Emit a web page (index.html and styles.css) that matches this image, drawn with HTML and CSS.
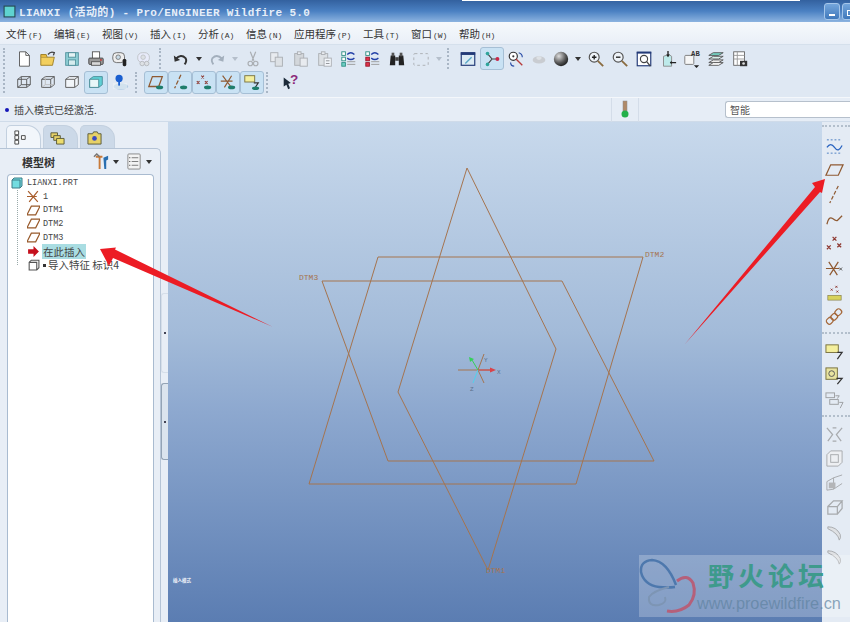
FILE: index.html
```html
<!DOCTYPE html>
<html lang="zh-CN">
<head>
  <meta charset="UTF-8">
  <title>LIANXI (活动的) - Pro/ENGINEER Wildfire 5.0</title>
  <link rel="stylesheet" href="styles.css">
</head>
<body>
  <div class="window">
    <div class="title-bar">
      <svg class="title-icon" viewBox="0 0 12 12"><rect x="1" y="1" width="10" height="10" fill="#5fd3d0" stroke="#26474f"/></svg>
      <span class="title-text">LIANXI (活动的) - Pro/ENGINEER Wildfire 5.0</span>
      <div class="win-buttons">
        <div class="win-btn"><i class="win-min"></i></div>
        <div class="win-btn"><i class="win-max"></i></div>
      </div>
    </div>

    <div class="menu-bar">
      <div class="menu-item">文件<span>(F)</span></div>
      <div class="menu-item">编辑<span>(E)</span></div>
      <div class="menu-item">视图<span>(V)</span></div>
      <div class="menu-item">插入<span>(I)</span></div>
      <div class="menu-item">分析<span>(A)</span></div>
      <div class="menu-item">信息<span>(N)</span></div>
      <div class="menu-item">应用程序<span>(P)</span></div>
      <div class="menu-item">工具<span>(T)</span></div>
      <div class="menu-item">窗口<span>(W)</span></div>
      <div class="menu-item">帮助<span>(H)</span></div>
    </div>

    <div class="toolbars">
      <div class="tool-row">
        <div class="grip"></div>
        <div class="tool"><svg viewBox="0 0 20 20"><path d="M5 2h7l4 4v12H5z" fill="#fff" stroke="#555"/><path d="M12 2v4h4" fill="none" stroke="#555"/></svg></div>
        <div class="tool"><svg viewBox="0 0 20 20"><path d="M2 8h15l-2 9H2z" fill="#f2cf5e" stroke="#9c7d22"/><path d="M2 8V5h6l1 3" fill="#e4b93f" stroke="#9c7d22"/><path d="M10 5q3-4 7-2l-1 3" fill="none" stroke="#444" stroke-width="1.5"/></svg></div>
        <div class="tool"><svg viewBox="0 0 20 20"><rect x="3" y="3" width="14" height="14" fill="#8fd0d6" stroke="#4f8f9a"/><rect x="6" y="3" width="8" height="5" fill="#e4f3f4" stroke="#4f8f9a"/><rect x="6" y="11" width="8" height="6" fill="#d5ecee" stroke="#4f8f9a"/></svg></div>
        <div class="tool"><svg viewBox="0 0 20 20"><rect x="6" y="2" width="8" height="8" fill="#fff" stroke="#555"/><rect x="2" y="9" width="16" height="7" rx="1" fill="#9a9a9a" stroke="#444"/><rect x="5" y="13" width="10" height="4" fill="#d8d8d8" stroke="#555"/><circle cx="15.500" cy="11" r="1" fill="#c62b2b"/></svg></div>
        <div class="tool"><svg viewBox="0 0 20 20"><rect x="2" y="3" width="13" height="11" rx="4" fill="#eee" stroke="#666"/><circle cx="8" cy="8" r="2.500" fill="#c9dbe8" stroke="#777"/><rect x="13" y="10" width="4" height="8" rx="1.500" fill="#222"/></svg></div>
        <div class="tool dim"><svg viewBox="0 0 20 20"><rect x="3" y="3" width="13" height="11" rx="5" fill="#eef" stroke="#aaa"/><circle cx="9" cy="8" r="2.500" fill="#ddd" stroke="#aaa"/><circle cx="13" cy="15" r="2.500" fill="#ddd" stroke="#999"/><circle cx="8" cy="15" r="2.500" fill="#ddd" stroke="#999"/></svg></div>
        <div class="grip grip-gap"></div>
        <div class="tool"><svg viewBox="0 0 20 20"><path d="M4 10q6-6 11-1q2 3-1 7" fill="none" stroke="#333" stroke-width="2.200"/><path d="M2 6l1 7 6-2z" fill="#333"/></svg></div>
        <div class="drop"></div>
        <div class="tool dim"><svg viewBox="0 0 20 20"><path d="M16 10q-6-6-11-1q-2 3 1 7" fill="none" stroke="#7c8a99" stroke-width="2"/><path d="M18 6l-1 7-6-2z" fill="#7c8a99"/></svg></div>
        <div class="drop drop-dim"></div>
        <div class="tool dim"><svg viewBox="0 0 20 20"><path d="M7 2l4 10M13 2l-4 10" stroke="#888" stroke-width="1.300"/><circle cx="7" cy="15" r="2.500" fill="none" stroke="#888" stroke-width="1.300"/><circle cx="13" cy="15" r="2.500" fill="none" stroke="#888" stroke-width="1.300"/></svg></div>
        <div class="tool dim"><svg viewBox="0 0 20 20"><rect x="3" y="3" width="8" height="10" fill="#eee" stroke="#888"/><rect x="8" y="8" width="8" height="10" fill="#ddd" stroke="#888"/></svg></div>
        <div class="tool dim"><svg viewBox="0 0 20 20"><rect x="3" y="4" width="10" height="13" fill="#ccc" stroke="#888"/><rect x="6" y="2" width="4" height="3" fill="#eee" stroke="#888"/><rect x="9" y="9" width="8" height="9" fill="#eee" stroke="#888"/></svg></div>
        <div class="tool dim"><svg viewBox="0 0 20 20"><rect x="3" y="4" width="10" height="13" fill="#ddd" stroke="#888"/><rect x="6" y="2" width="4" height="3" fill="#eee" stroke="#888"/><rect x="9" y="9" width="8" height="9" fill="#fff" stroke="#888"/><path d="M11 12h4M11 15h4" stroke="#555"/></svg></div>
        <div class="tool"><svg viewBox="0 0 20 20"><rect x="2" y="2" width="4" height="4" fill="#fff" stroke="#2c8f83"/><rect x="2" y="8" width="4" height="4" fill="#fff" stroke="#2c8f83"/><rect x="2" y="14" width="4" height="4" fill="#6ecfc4" stroke="#2c8f83"/><path d="M8 5q4-4 8 0M8 9q4 3 8 0" fill="none" stroke="#2340a8" stroke-width="1.500"/><path d="M8 13h9M8 16h9" stroke="#999"/></svg></div>
        <div class="tool"><svg viewBox="0 0 20 20"><rect x="2" y="2" width="4" height="4" fill="#fff" stroke="#2c8f83"/><rect x="2" y="8" width="4" height="4" fill="#e0314a" stroke="#99182b"/><rect x="2" y="14" width="4" height="4" fill="#e0314a" stroke="#99182b"/><path d="M8 5q4-4 8 0M8 9q4 3 8 0" fill="none" stroke="#2340a8" stroke-width="1.500"/><path d="M8 13h9M8 16h9" stroke="#999"/></svg></div>
        <div class="tool"><svg viewBox="0 0 20 20"><path d="M3 6h5v11H2zM12 6h5l1 11h-6z" fill="#222"/><rect x="8" y="8" width="4" height="4" fill="#444"/><rect x="4" y="3" width="3" height="4" fill="#555"/><rect x="13" y="3" width="3" height="4" fill="#555"/></svg></div>
        <div class="tool dim"><svg viewBox="0 0 20 20"><rect x="2" y="4" width="16" height="13" rx="1" fill="none" stroke="#888" stroke-dasharray="3 3"/></svg></div>
        <div class="drop drop-dim"></div>
        <div class="grip grip-gap-b"></div>
        <div class="tool"><svg viewBox="0 0 20 20"><rect x="2.500" y="3" width="15" height="14" fill="#dcebf4" stroke="#233a77" stroke-width="1.300"/><rect x="2" y="3" width="16" height="2.500" fill="#233a77"/><path d="M7 15l7-7" stroke="#58a6c6" stroke-width="1.500"/></svg></div>
        <div class="tool on"><svg viewBox="0 0 20 20"><path d="M5 4l5 6-5 6M10 10h7" fill="none" stroke="#444" stroke-width="1.300"/><circle cx="5" cy="4" r="2" fill="#2fa59b"/><circle cx="5" cy="16" r="2" fill="#2fa59b"/><circle cx="16" cy="10" r="2.200" fill="#c8284a"/></svg></div>
        <div class="tool"><svg viewBox="0 0 20 20"><circle cx="7" cy="7" r="4.500" fill="#fff" stroke="#333" stroke-width="1.300"/><circle cx="7" cy="7" r="1.200" fill="#333"/><path d="M10 10l7 7" stroke="#b63a3a" stroke-width="1.500"/><path d="M13 3q4 1 4 5M4 14q0 4 4 4" fill="none" stroke="#2c4fa8" stroke-width="1.300"/></svg></div>
        <div class="tool dim tool-slim"><svg viewBox="0 0 20 20"><ellipse cx="10" cy="11" rx="7" ry="4" fill="#bbb"/><ellipse cx="10" cy="9" rx="3" ry="2" fill="#ddd"/></svg></div>
        <div class="tool tool-slim"><svg viewBox="0 0 20 20"><defs><radialGradient id="ball" cx=".35" cy=".3" r=".8"><stop offset="0" stop-color="#ddd"/><stop offset=".6" stop-color="#555"/><stop offset="1" stop-color="#111"/></radialGradient></defs><circle cx="10" cy="10" r="8" fill="url(#ball)"/></svg></div>
        <div class="drop"></div>
        <div class="tool"><svg viewBox="0 0 20 20"><circle cx="8" cy="8" r="5.500" fill="#eef3f8" stroke="#555" stroke-width="1.300"/><path d="M5.500 8h5M8 5.500v5" stroke="#222" stroke-width="1.500"/><path d="M12 12l6 6" stroke="#8a6b3f" stroke-width="2"/></svg></div>
        <div class="tool"><svg viewBox="0 0 20 20"><circle cx="8" cy="8" r="5.500" fill="#eef3f8" stroke="#555" stroke-width="1.300"/><path d="M5.500 8h5" stroke="#222" stroke-width="1.500"/><path d="M12 12l6 6" stroke="#8a6b3f" stroke-width="2"/></svg></div>
        <div class="tool"><svg viewBox="0 0 20 20"><rect x="2.500" y="2.500" width="15" height="15" fill="#fff" stroke="#233a77" stroke-width="1.300"/><rect x="2" y="2" width="16" height="2" fill="#233a77"/><circle cx="10" cy="10" r="4" fill="none" stroke="#444" stroke-width="1.300"/><path d="M13 13l4 5" stroke="#444" stroke-width="1.500"/></svg></div>
        <div class="tool"><svg viewBox="0 0 20 20"><path d="M5 7l6-2 3 2v11H5z" fill="#bdeaea" stroke="#888"/><path d="M10 1v6M19 14h-6" stroke="#222" stroke-width="1.500"/><path d="M8 5l2 3 2-3zM14 12l-2 2 2 2z" fill="#222"/></svg></div>
        <div class="tool"><svg viewBox="0 0 20 20"><rect x="2" y="6" width="10" height="10" rx="1" fill="#f6f6f6" stroke="#777"/><text class="svg-tag" x="9" y="7">AB</text><path d="M12 17h6l-3 3z" fill="#222"/></svg></div>
        <div class="tool"><svg viewBox="0 0 20 20"><path d="M2 6l5-3h11l-5 3z" fill="#76d6c6" stroke="#555"/><path d="M2 10l5-3h11l-5 3z" fill="#d9efe9" stroke="#555"/><path d="M2 14l5-3h11l-5 3z" fill="#eee" stroke="#555"/><path d="M2 17l5-3h11l-5 3z" fill="#fff" stroke="#555"/></svg></div>
        <div class="tool"><svg viewBox="0 0 20 20"><rect x="3" y="2" width="12" height="15" fill="#fff" stroke="#666"/><path d="M3 6h12M3 10h12M7 2v15" stroke="#999"/><rect x="10" y="12" width="8" height="6" fill="#333"/><circle cx="14" cy="15" r="1.500" fill="#ddd"/></svg></div>
      </div>

      <div class="tool-row">
        <div class="grip"></div>
        <div class="tool"><svg viewBox="0 0 20 20"><path d="M3 7l4-3h10v9l-4 3H3zM3 7h10v9M13 7l4-3M7 4v9h10M3 16l4-3" fill="none" stroke="#555"/></svg></div>
        <div class="tool"><svg viewBox="0 0 20 20"><path d="M3 7l4-3h10v9l-4 3H3zM3 7h10v9M13 7l4-3" fill="none" stroke="#555"/><path d="M7 4v9h10M3 16l4-3" fill="none" stroke="#bbb"/></svg></div>
        <div class="tool"><svg viewBox="0 0 20 20"><path d="M3 7l4-3h10v9l-4 3H3zM3 7h10v9M13 7l4-3" fill="#f2f6fa" stroke="#555"/></svg></div>
        <div class="tool on"><svg viewBox="0 0 20 20"><path d="M3 7l4-3h10v9l-4 3H3z" fill="#5fd0d5" stroke="#4b8c97"/><path d="M3 7h10v9H3z" fill="#e8f7f8" stroke="#4b8c97"/></svg></div>
        <div class="tool"><svg viewBox="0 0 20 20"><ellipse cx="11" cy="15" rx="8" ry="3.500" fill="#a9c7e0"/><rect x="2" y="11" width="16" height="7" fill="#eef3f6" opacity=".6"/><circle cx="9" cy="6" r="4" fill="#1a5fd0"/><rect x="8" y="9" width="2" height="5" fill="#1a5fd0"/></svg></div>
        <div class="grip grip-gap-c"></div>
        <div class="tool on"><svg viewBox="0 0 20 20"><path d="M6 4h11l-4 11H2z" fill="none" stroke="#8f5a32" stroke-width="1.400"/><ellipse cx="14" cy="16" rx="4" ry="2" fill="#1e7d6c"/></svg></div>
        <div class="tool on"><svg viewBox="0 0 20 20"><path d="M11 2L4 17" stroke="#8f5a32" stroke-width="1.400" stroke-dasharray="5 2"/><ellipse cx="14" cy="16" rx="4" ry="2" fill="#1e7d6c"/></svg></div>
        <div class="tool on"><svg viewBox="0 0 20 20"><path d="M7 3l3 3M10 3L7 6M2 9l3 3M5 9l-3 3M11 9l3 3M14 9l-3 3" stroke="#8f3a32" stroke-width="1.200"/><ellipse cx="14" cy="16" rx="4" ry="2" fill="#1e7d6c"/></svg></div>
        <div class="tool on"><svg viewBox="0 0 20 20"><path d="M4 3l9 12M14 3L6 16M2 9h13" stroke="#8f5a32" stroke-width="1.300"/><ellipse cx="14" cy="16" rx="4" ry="2" fill="#1e7d6c"/></svg></div>
        <div class="tool on"><svg viewBox="0 0 20 20"><rect x="2" y="3" width="11" height="7" fill="#f4ef9d" stroke="#77703c"/><path d="M12 11h5l-4 6" fill="none" stroke="#333" stroke-width="1.300"/><ellipse cx="14" cy="17" rx="4" ry="2" fill="#1e7d6c"/></svg></div>
        <div class="grip grip-gap-d"></div>
        <div class="tool"><svg viewBox="0 0 20 20"><path d="M3 5l8 6-3 1 2 5-2 1-2-5-3 2z" fill="#1d2b3a"/><text class="svg-help" x="10" y="12">?</text></svg></div>
      </div>
    </div>

    <div class="message-bar">
      <div class="message"><i class="bullet"></i>插入模式已经激活.</div>
      <div class="light-cell">
        <svg viewBox="0 0 10 20" class="light"><rect x="3" y="1" width="4" height="10" fill="#b08a68" stroke="#8d8d8d" stroke-width=".5"/><circle cx="5" cy="14" r="3.500" fill="#22b04a"/></svg>
      </div>
      <div class="filter-box">智能</div>
    </div>

    <div class="main">
      <div class="sidebar">
        <div class="panel-wrap">
          <div class="tabs">
            <div class="tab tab-on"><svg viewBox="0 0 16 16"><path d="M2 1h4v4H2zM2 6h4v4H2zM2 11h4v4H2zM9 6h4v4H9z" fill="#fff" stroke="#444"/></svg></div>
            <div class="tab"><svg viewBox="0 0 16 16"><path d="M1 3h7v5H1z" fill="#e6d168" stroke="#5a5a3a"/><path d="M4 6h7v5H4z" fill="#e6d168" stroke="#5a5a3a"/><path d="M7 9h8v6H7z" fill="#ecdc6d" stroke="#5a5a3a"/></svg></div>
            <div class="tab"><svg viewBox="0 0 16 16"><path d="M1 4h5l1-2h4l1 2h3v11H1z" fill="#e6d168" stroke="#5a5a3a"/><circle cx="8" cy="9" r="2.500" fill="#3a49c2"/></svg></div>
          </div>
          <div class="panel">
            <div class="panel-head">
              <b class="panel-title">模型树</b>
              <svg class="head-icon" viewBox="0 0 18 18"><path d="M3 3h7v2H8v12H6V5H3z" fill="#c87a3a"/><path d="M11 5l5-2v4l-2 1v9h-2z" fill="#2a6fb0"/><path d="M1 4l3-3 3 3" fill="none" stroke="#777" stroke-width="1.500"/></svg>
              <i class="head-drop"></i>
              <svg class="head-icon list-icon" viewBox="0 0 18 18"><rect x="2" y="1" width="13" height="16" rx="1" fill="#f3f3f3" stroke="#888"/><path d="M6 5h7M6 9h7M6 13h7" stroke="#777"/><path d="M3.500 5h1M3.500 9h1M3.500 13h1" stroke="#222"/></svg>
              <i class="head-drop"></i>
            </div>
            <div class="tree">
              <div class="tree-row tree-root">
                <svg class="tree-icon" viewBox="0 0 12 12"><path d="M1 3l2-2h8v8l-2 2H1z" fill="#73dce0" stroke="#3f7d88"/><path d="M1 3h8v8" fill="none" stroke="#3f7d88"/></svg>
                <span>LIANXI.PRT</span>
              </div>
              <div class="tree-kids">
                <div class="tree-row">
                  <svg class="tree-icon" viewBox="0 0 12 12"><path d="M1 1l9 10M10 1L2 11M0 6h9" stroke="#a85c2a" stroke-width="1.100"/></svg>
                  <span>1</span>
                </div>
                <div class="tree-row">
                  <svg class="tree-icon" viewBox="0 0 12 12"><path d="M4 2h8L8 10H0z" fill="#fff" stroke="#97592a" stroke-width="1.100"/></svg>
                  <span>DTM1</span>
                </div>
                <div class="tree-row">
                  <svg class="tree-icon" viewBox="0 0 12 12"><path d="M4 2h8L8 10H0z" fill="#fff" stroke="#97592a" stroke-width="1.100"/></svg>
                  <span>DTM2</span>
                </div>
                <div class="tree-row">
                  <svg class="tree-icon" viewBox="0 0 12 12"><path d="M4 2h8L8 10H0z" fill="#fff" stroke="#97592a" stroke-width="1.100"/></svg>
                  <span>DTM3</span>
                </div>
                <div class="tree-row">
                  <svg class="tree-icon" viewBox="0 0 12 12"><path d="M1 4h5V1l5 5-5 5V8H1z" fill="#c5101c"/></svg>
                  <span class="tree-cn tree-here">在此插入</span>
                </div>
                <div class="tree-row">
                  <svg class="tree-icon" viewBox="0 0 12 12"><path d="M2 4l2-2h7v7l-2 2H2z" fill="#fff" stroke="#555"/><path d="M2 4h7v7" fill="none" stroke="#555"/></svg>
                  <span class="tree-cn"><i class="tree-mark"></i>导入特征 标识4</span>
                </div>
              </div>
            </div>
          </div>
        </div>
        <div class="sash">
          <div class="sash-handle"><i></i></div>
          <div class="sash-handle sash-handle-dark"><i></i></div>
        </div>
      </div>

      <div class="canvas">
        <svg class="model" viewBox="168 122 654 500">
          <g class="datum">
            <path d="M467 168L556 349L488 570L398 392Z"/>
            <path d="M378 257H643L576 484H309Z"/>
            <path d="M322 281H562L654 461H388Z"/>
          </g>
          <text class="datum-label" x="645" y="257">DTM2</text>
          <text class="datum-label" x="299" y="280">DTM3</text>
          <text class="datum-label" x="486" y="573">DTM1</text>
          <g class="csys">
            <path d="M478 370L484 354M478 370L484 383" stroke="#a5744f"/>
            <path d="M458 370H492" stroke="#a5744f"/>
            <path d="M478 370H490" stroke="#d9434a"/>
            <path d="M490 367.500L496 370L490 372.500Z" fill="#d9434a"/>
            <path d="M478 370L472 360" stroke="#35d05a" stroke-width="1.500"/>
            <path d="M469 357L474 359L470 362Z" fill="#35d05a"/>
            <path d="M478 370L473 383" stroke="#4fd2ee" stroke-width="1.500"/>
          </g>
          <text class="csys-label" x="497" y="374">X</text>
          <text class="csys-label" x="484" y="362">Y</text>
          <text class="csys-label" x="470" y="391">Z</text>
          <text class="mode-label" x="173" y="582">插入模式</text>
        </svg>
      </div>

      <div class="side-tools">
        <div class="side-rule"></div>
        <div class="side-tool"><svg viewBox="0 0 20 20"><path d="M2 3h16M2 17h16" stroke="#4a7cc0" stroke-dasharray="2 2"/><path d="M2 11q4-6 8 0t8-2" fill="none" stroke="#2a64c0" stroke-width="1.300"/></svg></div>
        <div class="side-tool"><svg viewBox="0 0 20 20"><path d="M6 4h13l-5 11H1z" fill="none" stroke="#8f5a32" stroke-width="1.300"/></svg></div>
        <div class="side-tool"><svg viewBox="0 0 20 20"><path d="M14 1L5 19" stroke="#8f5a32" stroke-width="1.300" stroke-dasharray="4 2"/></svg></div>
        <div class="side-tool"><svg viewBox="0 0 20 20"><path d="M2 15q2-9 6-6t5 2t5-5" fill="none" stroke="#8f5a32" stroke-width="1.300"/></svg></div>
        <div class="side-tool"><svg viewBox="0 0 20 20"><path d="M8 3l4 4M12 3L8 7M2 12l4 4M6 12l-4 4M13 10l4 4M17 10l-4 4" stroke="#8f3a32" stroke-width="1.300"/></svg></div>
        <div class="side-tool"><svg viewBox="0 0 20 20"><path d="M4 3l9 14M14 3L5 17M1 10h14" stroke="#8f5a32" stroke-width="1.300"/><path d="M15 9l3 3M18 9l-3 3" stroke="#555"/></svg></div>
        <div class="side-tool"><svg viewBox="0 0 20 20"><rect x="3" y="13" width="14" height="5" fill="#d8d25c" stroke="#77703c" stroke-width=".6"/><path d="M6 6l2 2M8 6L6 8M11 3l2 2M13 3l-2 2M12 8l2 2M14 8l-2 2" stroke="#8f3a32"/></svg></div>
        <div class="side-tool"><svg viewBox="0 0 20 20"><rect x="2" y="11" width="6" height="7" rx="2.500" transform="rotate(45 5 14.500)" fill="none" stroke="#a5683a" stroke-width="1.300"/><rect x="7" y="7" width="6" height="7" rx="2.500" transform="rotate(45 10 10)" fill="none" stroke="#a5683a" stroke-width="1.300"/><rect x="11" y="2" width="6" height="7" rx="2.500" transform="rotate(45 14 5.500)" fill="none" stroke="#a5683a" stroke-width="1.300"/></svg></div>
        <div class="side-rule side-rule-gap"></div>
        <div class="side-tool"><svg viewBox="0 0 20 20"><rect x="1" y="3" width="13" height="8" fill="#f4ef9d" stroke="#77703c"/><path d="M13 11h5l-5 7" fill="none" stroke="#333" stroke-width="1.300"/></svg></div>
        <div class="side-tool"><svg viewBox="0 0 20 20"><rect x="1" y="2" width="12" height="12" fill="#e8e4a0" stroke="#77703c"/><circle cx="7" cy="8" r="3" fill="none" stroke="#555"/><path d="M12 13h6l-5 6" fill="none" stroke="#333" stroke-width="1.300"/></svg></div>
        <div class="side-tool side-dim"><svg viewBox="0 0 20 20"><rect x="1" y="2" width="9" height="5" fill="none" stroke="#777"/><rect x="5" y="9" width="9" height="5" fill="none" stroke="#777"/><path d="M11 5h4l-2 3M15 12h4l-3 6" fill="none" stroke="#777"/></svg></div>
        <div class="side-rule side-rule-gap"></div>
        <div class="side-tool side-dim"><svg viewBox="0 0 20 20"><path d="M2 3l6 7-5 7M18 3l-6 7 5 7M8 3h4M8 17h4" fill="none" stroke="#888" stroke-width="1.300"/></svg></div>
        <div class="side-tool side-dim"><svg viewBox="0 0 20 20"><path d="M2 6l4-4h12v12l-4 4H2z" fill="#f2f2f2" stroke="#888"/><rect x="6" y="6" width="8" height="8" fill="none" stroke="#888"/></svg></div>
        <div class="side-tool side-dim"><svg viewBox="0 0 20 20"><path d="M2 8l7-4v12l-7 1zM9 4l9-3M9 16l9-6" fill="none" stroke="#888"/><rect x="4" y="9" width="7" height="6" fill="#999"/></svg></div>
        <div class="side-tool side-dim"><svg viewBox="0 0 20 20"><path d="M3 9h10v8H3zM3 9l6-6h9l-5 6M13 17l5-6V3" fill="none" stroke="#888" stroke-width="1.300"/></svg></div>
        <div class="side-tool side-dim"><svg viewBox="0 0 20 20"><path d="M3 4q9 0 13 8q1 4-1 6q-1-7-12-12z" fill="#ddd" stroke="#888"/></svg></div>
        <div class="side-tool side-dim"><svg viewBox="0 0 20 20"><path d="M3 4q9 0 13 8q1 4-1 6q-1-7-12-12z" fill="#ddd" stroke="#888"/></svg></div>
      </div>
    </div>
  </div>

  <svg class="arrows" viewBox="0 0 850 622">
    <path d="M100 249L116 247.500L115 249.500L273 327L113 258L109 266Z"/>
    <path d="M825 179L812 183L815 187L685 344L820 192L822 193Z"/>
  </svg>

  <div class="watermark">
    <svg class="wm-logo" viewBox="0 0 60 62">
      <path d="M37 30Q28 6 13 5Q1 6 2 17Q5 30 20 32Q28 33 36 32" fill="none" stroke="#4d78ad" stroke-width="2.500"/>
      <path d="M30 32Q14 36 10 42Q9 52 20 50Q28 48 26 42" fill="none" stroke="#7d95b4" stroke-width="2"/>
      <path d="M28 56Q40 58 50 50Q58 40 54 28Q48 18 38 26" fill="none" stroke="#b5607a" stroke-width="3"/>
    </svg>
    <div class="wm-text">
      <div class="wm-name">野火论坛</div>
      <div class="wm-url">www.proewildfire.cn</div>
    </div>
  </div>
</body>
</html>
```

FILE: styles.css
```css
* {
  box-sizing: border-box;
}

body {
  margin: 0;
  width: 850px;
  height: 622px;
  overflow: hidden;
  position: relative;
  font-family: "Noto Sans CJK SC", "Liberation Sans", sans-serif;
  color: #333;
  background: #e4ebf4;
}

.window {
  width: 850px;
  height: 622px;
  display: flex;
  flex-direction: column;
}

/* title bar */
.title-bar {
  height: 22px;
  flex: none;
  display: flex;
  align-items: center;
  padding-left: 3px;
  background:
    linear-gradient(#fff, #fff) 462px 0 / 338px 1px no-repeat,
    linear-gradient(#33619f, #4a80c2 50%, #8cb3e0);
  color: #e6eef8;
}

.title-icon {
  width: 13px;
  height: 13px;
  margin-right: 3px;
}

.title-text {
  font-family: "Liberation Mono", "Noto Sans CJK SC", monospace;
  font-size: 11px;
  font-weight: bold;
  letter-spacing: .35px;
}

.win-buttons {
  margin-left: auto;
  display: flex;
  gap: 2px;
  margin-right: -8px;
}

.win-btn {
  width: 16px;
  height: 17px;
  border-radius: 3px;
  background: linear-gradient(#74a6dc, #3f78bb);
  border: 1px solid #a5c6ea;
  display: flex;
  align-items: flex-end;
  padding: 0 0 3px 4px;
}

.win-min {
  width: 6px;
  height: 2px;
  background: #fff;
}

.win-max {
  width: 7px;
  height: 6px;
  border: 1px solid #fff;
}

/* menu */
.menu-bar {
  height: 23px;
  flex: none;
  display: flex;
  align-items: center;
  gap: 11.600px;
  padding-left: 6px;
  background: linear-gradient(#f6f9fc, #e9eff7);
  border-bottom: 1px solid #d5e0ec;
  font-size: 10.500px;
}

.menu-item span {
  margin-left: 1px;
  font-family: "Liberation Mono", monospace;
  font-size: 8px;
}

/* toolbars */
.toolbars {
  height: 52px;
  flex: none;
  background: #dfe8f3;
  padding: 2px 0 0 3px;
}

.tool-row {
  height: 23.500px;
  display: flex;
  align-items: center;
}

.tool {
  width: 24px;
  height: 23px;
  flex: none;
  display: flex;
  align-items: center;
  justify-content: center;
  border-radius: 3px;
}

.tool svg {
  width: 18px;
  height: 18px;
}

.tool-slim {
  width: 22px;
}

.tool.on {
  background: #c9e2f4;
  border: 1px solid #a6bfd5;
}

.dim {
  opacity: .6;
}

.grip {
  width: 3px;
  height: 21px;
  flex: none;
  margin: 0 6px 0 0;
  border-left: 2px dotted #a9b6c5;
}

.grip-gap {
  margin: 0 7px 0 3px;
}

.grip-gap-b {
  margin: 0 6px 0 2px;
}

.grip-gap-c {
  margin: 0 6px 0 3px;
}

.grip-gap-d {
  margin: 0 9px 0 2px;
}

.drop {
  width: 0;
  height: 0;
  flex: none;
  margin: 0 3px;
  border-left: 3px solid transparent;
  border-right: 3px solid transparent;
  border-top: 4px solid #333;
}

.drop-dim {
  border-top-color: #b5bfcb;
}

.svg-tag {
  font-family: "Liberation Mono", monospace;
  font-size: 8px;
  font-weight: bold;
  fill: #333;
}

.svg-help {
  font-family: "Liberation Sans", sans-serif;
  font-size: 15px;
  font-weight: bold;
  fill: #8c2a7a;
}

/* message area */
.message-bar {
  height: 25px;
  flex: none;
  display: flex;
  align-items: center;
  background: #e6edf6;
  border-top: 1px solid #f4f7fb;
  border-bottom: 1px solid #cfdbe9;
  font-size: 10px;
}

.message {
  width: 611px;
  flex: none;
  display: flex;
  align-items: center;
  padding-left: 5px;
  color: #444;
}

.bullet {
  width: 4px;
  height: 4px;
  margin-right: 5px;
  border-radius: 50%;
  background: #1616b8;
}

.light-cell {
  width: 28px;
  height: 24px;
  flex: none;
  display: flex;
  align-items: center;
  justify-content: center;
  border-left: 1px solid #d4dde9;
  border-right: 1px solid #d4dde9;
}

.light {
  width: 10px;
  height: 20px;
}

.filter-box {
  flex: 1;
  height: 17px;
  margin-left: 86px;
  padding-left: 4px;
  line-height: 16px;
  background: #fff;
  border: 1px solid #b6c0cc;
  border-right: 0;
  border-radius: 3px 0 0 3px;
  color: #555;
}

/* main area */
.main {
  flex: 1;
  min-height: 0;
  display: flex;
}

.sidebar {
  width: 168px;
  flex: none;
  display: flex;
  background: #e8eef6;
}

.panel-wrap {
  width: 161px;
  flex: none;
  display: flex;
  flex-direction: column;
}

.tabs {
  height: 26px;
  flex: none;
  display: flex;
  gap: 2px;
  padding: 3px 0 0 6px;
}

.tab {
  width: 35px;
  display: flex;
  align-items: center;
  justify-content: center;
  padding-right: 6px;
  background: #ccd9e8;
  border: 1px solid #c3d0df;
  border-bottom: 0;
  border-radius: 5px 14px 0 0;
}

.tab-on {
  background: #f2f6fb;
}

.tab svg {
  width: 15px;
  height: 15px;
}

.panel {
  flex: 1;
  min-height: 0;
  display: flex;
  flex-direction: column;
  margin-left: -1px;
  border: 1px solid #b5c4d6;
  border-bottom: 0;
  border-radius: 0 5px 0 0;
}

.panel-head {
  height: 25px;
  flex: none;
  display: flex;
  align-items: center;
  padding-left: 22px;
}

.panel-title {
  width: 71px;
  font-size: 11px;
  color: #333;
}

.head-icon {
  width: 17px;
  height: 17px;
}

.list-icon {
  margin-left: 7px;
}

.head-drop {
  width: 0;
  height: 0;
  margin-left: 3px;
  border-left: 3px solid transparent;
  border-right: 3px solid transparent;
  border-top: 4px solid #333;
}

.tree {
  flex: 1;
  margin: 0 6px 0 7px;
  padding: 1px 0 0 3px;
  background: #fff;
  border: 1px solid #a9bbd0;
  border-bottom: 0;
  border-radius: 4px 4px 0 0;
  font-family: "Liberation Mono", "Noto Sans CJK SC", monospace;
  font-size: 8.500px;
  color: #444;
}

.tree-row {
  height: 13.700px;
  display: flex;
  align-items: center;
  white-space: nowrap;
}

.tree-icon {
  width: 12px;
  height: 12px;
  flex: none;
  margin-right: 4px;
}

.tree-kids {
  margin-left: 6px;
  padding-left: 9px;
  height: 76px;
  background: linear-gradient(#9aa 1px, transparent 1px) 0 0 / 1px 2px repeat-y;
}

.tree-kids .tree-icon {
  width: 13px;
  height: 13px;
  margin-right: 3px;
}

.tree-kids .tree-row {
  padding-left: 1px;
}

.tree-cn {
  font-family: "Noto Sans CJK SC", sans-serif;
  font-size: 10.500px;
}

.tree-here {
  padding: 0 1px;
  margin-left: -1px;
  background: #a9dde2;
}

.tree-mark {
  display: inline-block;
  width: 3px;
  height: 3px;
  margin-right: 2px;
  vertical-align: 2px;
  background: #333;
}

.sash {
  width: 7px;
  flex: none;
  display: flex;
  flex-direction: column;
  gap: 10px;
  padding-top: 171px;
}

.sash-handle {
  height: 80px;
  display: flex;
  align-items: center;
  justify-content: center;
  border: 1px solid #d5dee9;
  border-right: 0;
  border-radius: 3px 0 0 3px;
}

.sash-handle-dark {
  height: 77px;
  background: #dbe4ee;
  border-color: #93a3b5;
}

.sash-handle i {
  width: 2px;
  height: 2px;
  background: #445;
}

/* graphics window */
.canvas {
  flex: 1;
  min-width: 0;
  position: relative;
  background: linear-gradient(#c8d9ec, #a3bbd9 42%, #8da8cf 58%, #5b7db2);
}

.model {
  position: absolute;
  left: 0;
  top: 0;
  width: 100%;
  height: 100%;
}

.datum path {
  fill: none;
  stroke: #a5744f;
  stroke-width: 1;
}

.csys path {
  stroke-width: 1;
}

.datum-label {
  font-family: "Liberation Mono", monospace;
  font-size: 8px;
  fill: #a5744f;
}

.csys-label {
  font-family: "Liberation Mono", monospace;
  font-size: 6px;
  fill: #5c6f8a;
}

.mode-label {
  font-family: "Noto Sans CJK SC", sans-serif;
  font-size: 4.500px;
  font-weight: bold;
  fill: #f2f5fa;
}

.side-tools {
  width: 28px;
  flex: none;
  display: flex;
  flex-direction: column;
  padding-top: 3px;
  background: #e4ebf4;
}

.side-rule {
  width: 100%;
  height: 2px;
  flex: none;
  margin-bottom: 7px;
  border-top: 2px dotted #b3bfcc;
}

.side-rule-gap {
  margin: 3px 0 5px;
}

.side-tool {
  width: 24px;
  height: 24.400px;
  flex: none;
  display: flex;
  align-items: center;
  justify-content: center;
}

.side-tool svg {
  width: 19px;
  height: 19px;
}

.side-dim {
  opacity: .65;
}

/* overlays */
.arrows {
  position: absolute;
  left: 0;
  top: 0;
  width: 850px;
  height: 622px;
}

.arrows path {
  fill: #ec1c24;
}

.watermark {
  position: absolute;
  left: 639px;
  top: 555px;
  width: 211px;
  height: 62px;
  display: flex;
  background: rgba(255, 255, 255, .24);
}

.wm-logo {
  width: 60px;
  height: 62px;
  flex: none;
}

.wm-text {
  padding-top: 6px;
  margin-left: 9px;
}

.wm-name {
  font-size: 26px;
  line-height: 27px;
  font-weight: bold;
  letter-spacing: 4px;
  color: #3e9a8c;
}

.wm-url {
  margin: 6px 0 0 -11px;
  font-family: "Liberation Sans", sans-serif;
  font-size: 16.300px;
  line-height: 18px;
  white-space: nowrap;
  color: rgba(94, 130, 160, .7);
}
```
